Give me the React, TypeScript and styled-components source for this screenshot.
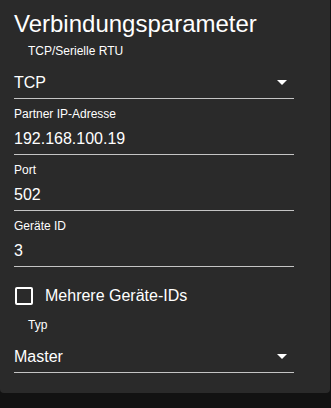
import React from "react";
import styled, { createGlobalStyle } from "styled-components";

const Global = createGlobalStyle`
  html, body { margin: 0; padding: 0; background: #121212; }
  body { font-family: "Liberation Sans", Arial, sans-serif; color: #ffffff; }
`;

const Panel = styled.section`
  width: 330px;
  height: 393px;
  box-sizing: border-box;
  background: #2a2a2a;
  border-radius: 0 0 4px 4px;
  padding: 10px 36px 0 14px;
  display: flex;
  flex-direction: column;
`;

const Title = styled.h1`
  margin: 0;
  font-size: 24px;
  line-height: 28px;
  font-weight: 400;
  color: #ffffff;
`;

const Label = styled.div<{ $indent?: boolean }>`
  font-size: 12px;
  line-height: 14px;
  color: #ffffff;
  padding-left: ${(p) => (p.$indent ? "14px" : "0")};
  margin-top: ${(p) => (p.$indent ? "6px" : "0")};
`;

const Underlined = styled.div<{ $gap: number }>`
  display: flex;
  align-items: center;
  justify-content: space-between;
  margin-top: ${(p) => p.$gap}px;
  padding: 0 7px 6px 0;
  border-bottom: 1px solid #c4c4c4;
  font-size: 16px;
  line-height: 19px;
  color: #ffffff;
`;

const Field = styled.div`
  display: flex;
  flex-direction: column;
  margin-top: 8px;
`;

const CheckRow = styled.label`
  display: flex;
  align-items: center;
  gap: 12px;
  margin-top: 19px;
  padding-left: 1px;
  font-size: 16px;
  line-height: 19px;
`;

const Box = styled.span`
  width: 18px;
  height: 18px;
  box-sizing: border-box;
  border: 2px solid #ffffff;
  border-radius: 2px;
`;

const TypLabel = styled(Label)`
  margin-top: 13px;
`;

const Arrow = () => (
  <svg width="10" height="5" viewBox="7 10 10 5" aria-hidden="true">
    <path d="M7 10l5 5 5-5z" fill="#ffffff" />
  </svg>
);

const fields = [
  { label: "Partner IP-Adresse", value: "192.168.100.19" },
  { label: "Port", value: "502" },
  { label: "Geräte ID", value: "3" },
];

export default function App() {
  return (
    <>
      <Global />
      <Panel>
        <Title>Verbindungsparameter</Title>
        <Label $indent>TCP/Serielle RTU</Label>
        <Underlined $gap={15}>
          <span>TCP</span>
          <Arrow />
        </Underlined>
        {fields.map((f) => (
          <Field key={f.label}>
            <Label>{f.label}</Label>
            <Underlined $gap={8}>
              <span>{f.value}</span>
            </Underlined>
          </Field>
        ))}
        <CheckRow>
          <Box />
          <span>Mehrere Geräte-IDs</span>
        </CheckRow>
        <TypLabel $indent>Typ</TypLabel>
        <Underlined $gap={15}>
          <span>Master</span>
          <Arrow />
        </Underlined>
      </Panel>
    </>
  );
}
